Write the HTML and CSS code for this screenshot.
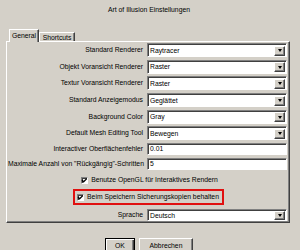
FILE: index.html
```html
<!DOCTYPE html>
<html>
<head>
<meta charset="utf-8">
<link rel="stylesheet" href="styles.css">
</head>
<body>
<div class="title">Art of Illusion Einstellungen</div>
<div class="tabs">
  <div class="tab active">General</div>
  <div class="tab">Shortcuts</div>
</div>
<div class="panel">
  <div class="row crow"><span class="lbl">Standard Renderer</span><div class="combo"><span class="val">Raytracer</span><span class="arrow"></span></div></div>
  <div class="row crow"><span class="lbl">Objekt Voransicht Renderer</span><div class="combo"><span class="val">Raster</span><span class="arrow"></span></div></div>
  <div class="row crow"><span class="lbl">Textur Voransicht Renderer</span><div class="combo"><span class="val">Raster</span><span class="arrow"></span></div></div>
  <div class="row crow"><span class="lbl">Standard Anzeigemodus</span><div class="combo"><span class="val">Geglättet</span><span class="arrow"></span></div></div>
  <div class="row crow"><span class="lbl">Background Color</span><div class="combo"><span class="val">Gray</span><span class="arrow"></span></div></div>
  <div class="row crow"><span class="lbl">Default Mesh Editing Tool</span><div class="combo"><span class="val">Bewegen</span><span class="arrow"></span></div></div>
  <div class="row trow"><span class="lbl">Interactiver Oberflächenfehler</span><div class="field">0.01</div></div>
  <div class="row trow"><span class="lbl">Maximale Anzahl von "Rückgängig"-Schritten</span><div class="field">5</div></div>
  <div class="checkrow">
    <div class="check"><span class="box"><svg viewBox="0 0 7 7" width="7" height="7"><path d="M1 3.2 L2.6 4.8 L5.8 1.6" fill="none" stroke="#000" stroke-width="1.3"/></svg></span><span>Benutze OpenGL für Interaktives Rendern</span></div>
  </div>
  <div class="checkrow hl">
    <div class="check marked"><span class="box"><svg viewBox="0 0 7 7" width="7" height="7"><path d="M1 3.2 L2.6 4.8 L5.8 1.6" fill="none" stroke="#000" stroke-width="1.3"/></svg></span><span>Beim Speichern Sicherungskopien behalten</span></div>
  </div>
  <div class="row srow"><span class="lbl">Sprache</span><div class="combo"><span class="val">Deutsch</span><span class="arrow"></span></div></div>
</div>
<div class="buttons">
  <button class="btn default">OK</button>
  <button class="btn">Abbrechen</button>
</div>
</body>
</html>
```

FILE: styles.css
```css
html, body {
  margin: 0;
  padding: 0;
}
body {
  width: 300px;
  height: 250px;
  overflow: hidden;
  background: #d4d0c8;
  color: #000;
  font-family: "Liberation Sans", Arial, sans-serif;
  font-size: 6.8px;
}
.title {
  box-sizing: border-box;
  height: 29px;
  padding-top: 6px;
  padding-right: 2px;
  line-height: 8px;
  text-align: center;
}
.tabs {
  display: flex;
  align-items: flex-end;
  height: 12px;
  margin-left: 9px;
  position: relative;
  z-index: 1;
}
.tab {
  box-sizing: border-box;
  height: 9px;
  width: 36px;
  line-height: 9px;
  text-align: center;
  white-space: nowrap;
  border-top: 1px solid #fff;
  border-left: 1px solid #fff;
  border-right: 1px solid #404040;
  box-shadow: inset -1px 0 #808080;
  background: #d4d0c8;
}
.tab.active {
  height: 13px;
  width: 30px;
  line-height: 11px;
  margin-bottom: -1px;
}
.panel {
  box-sizing: border-box;
  margin-left: 6px;
  width: 284px;
  height: 182px;
  border: 1px solid;
  border-color: #fff #404040 #404040 #fff;
  box-shadow: inset -1px -1px #808080;
  padding-top: 1px;
  padding-left: 1px;
}
.row {
  display: grid;
  grid-template-columns: 136px 140px;
  column-gap: 3px;
  align-items: start;
}
.lbl {
  text-align: right;
  white-space: nowrap;
  padding-right: 1px;
}
.crow {
  height: 16.7px;
}
.crow .lbl {
  line-height: 14px;
}
.trow {
  height: 15px;
}
.trow .lbl {
  line-height: 12px;
}
.combo {
  box-sizing: border-box;
  height: 14px;
  display: flex;
  align-items: center;
  justify-content: space-between;
  background: #fff;
  border: 1px solid;
  border-color: #808080 #fff #fff #808080;
  box-shadow: inset 1px 1px #404040;
  padding: 1px 1px 0 2px;
}
.val {
  line-height: 10px;
}
.arrow {
  box-sizing: border-box;
  width: 11px;
  height: 10px;
  display: flex;
  align-items: center;
  justify-content: center;
  background: #d4d0c8;
  border: 1px solid;
  border-color: #fff #404040 #404040 #fff;
  box-shadow: inset -1px -1px #808080;
}
.arrow::after {
  content: "";
  width: 0;
  height: 0;
  border-left: 2.5px solid transparent;
  border-right: 2.5px solid transparent;
  border-top: 3px solid #000;
}
.field {
  box-sizing: border-box;
  height: 12px;
  line-height: 10px;
  background: #fff;
  border: 1px solid;
  border-color: #808080 #fff #fff #808080;
  box-shadow: inset 1px 1px #404040;
  padding-left: 2px;
}
.checkrow {
  display: flex;
  justify-content: center;
  align-items: center;
  height: 14px;
  padding-left: 2px;
}
.checkrow.hl {
  height: 19px;
  align-items: flex-start;
  padding-left: 0;
}
.check {
  display: flex;
  align-items: center;
  gap: 3px;
  line-height: 10px;
  white-space: nowrap;
}
.box {
  box-sizing: border-box;
  flex: none;
  width: 7px;
  height: 7px;
  display: flex;
  background: #fff;
  border: 1px solid;
  border-color: #808080 #fff #fff #808080;
  box-shadow: inset 1px 1px #404040;
  position: relative;
}
.box svg {
  position: absolute;
  left: -1px;
  top: -1px;
}
.check.marked {
  box-sizing: border-box;
  margin-top: 2px;
  height: 16px;
  border: 2px solid #e01010;
  padding: 0 3px 0 2px;
}
.srow {
  height: 16px;
  padding-top: 3px;
}
.srow .combo {
  height: 12px;
}
.srow .lbl {
  line-height: 12px;
}
.srow .arrow {
  height: 9px;
}
.buttons {
  display: flex;
  justify-content: center;
  gap: 4px;
  margin-top: 15px;
  padding-right: 2px;
}
.btn {
  box-sizing: border-box;
  height: 17px;
  padding: 0 0 3px 0;
  font: inherit;
  color: #000;
  background: #d4d0c8;
  border: 1px solid;
  border-color: #fff #404040 #404040 #fff;
  box-shadow: inset -1px -1px #808080;
  width: 54px;
}
.btn.default {
  width: 30px;
  border: 1px solid #000;
  box-shadow: inset 1px 1px #fff, inset -1px -1px #404040, inset -2px -2px #808080;
}
```
